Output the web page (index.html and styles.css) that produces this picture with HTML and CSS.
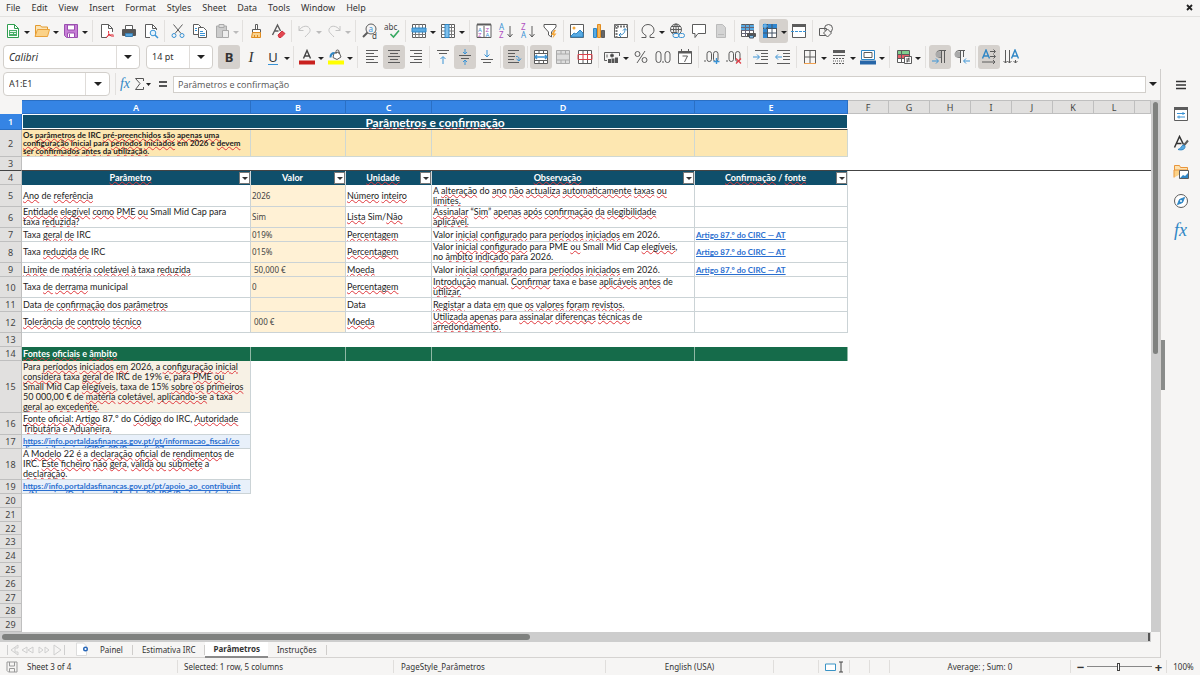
FILE: index.html
```html
<!DOCTYPE html>
<html lang="pt">
<head>
<meta charset="utf-8">
<title>Parâmetros</title>
<link rel="stylesheet" href="styles.css">
</head>
<body>
<nav class="menubar" aria-label="Menu">
<button>File</button><button>Edit</button><button>View</button><button>Insert</button><button>Format</button><button>Styles</button><button>Sheet</button><button>Data</button><button>Tools</button><button>Window</button><button>Help</button>
<button class="close" aria-label="Close"><svg width="7" height="7" viewBox="0 0 7 7"><path d="M1 1l5 5M6 1L1 6" stroke="#222" stroke-width="1.8"/></svg></button>
</nav>

<div class="toolbar" role="toolbar" aria-label="Standard">
<button class="tb dd" aria-label="New"><svg class="i" viewBox="0 0 16 16"><path d="M2.5 1.5h7l4 4v9h-11z" stroke="#2f9e4f" fill="#fff"/><path d="M9.500 1.500v4h4" stroke="#2f9e4f"/><path d="M4 7h8v6H4z" fill="#4aae68" stroke="none"/><path d="M5 8.500h6M5 10.500h3M9 10.500h2" stroke="#e8f7ec"/></svg></button>
<button class="tb dd" aria-label="Open"><svg class="i" viewBox="0 0 16 16"><path d="M1.500 13V2.500h5l1 1.500h6v2" stroke="#e39a2d" fill="#fbe3b4"/><path d="M1 13.500L3.500 6.500h12l-2 7z" fill="#fbd288" stroke="#e9a23b"/></svg></button>
<button class="tb dd" aria-label="Save"><svg class="i" viewBox="0 0 16 16"><path d="M1.500 1.500h13v13h-11l-2-2z" fill="#c77fd6" stroke="#9b4fb0"/><path d="M4.500 2h7v5h-7z" fill="#fff" stroke="#9b4fb0"/><path d="M4.500 10h7v4.500h-7z" fill="#fff" stroke="#9b4fb0"/><path d="M6.500 11v3" stroke="#9b4fb0"/></svg></button>
<span class="sep wide"></span>
<button class="tb" aria-label="Export as PDF"><svg class="i" viewBox="0 0 16 16"><path d="M8 14.500H2.500v-13h7l4 4V9" fill="#fff"/><path d="M9.500 1.500v4h4"/><path d="M9.500 8c1 4-1 6-2.500 6.500M10 11c1 2 3 2.500 5 2M8 13.500c2-1.500 4-2 6.500-1.500" stroke="#e0303c"/></svg></button>
<button class="tb" aria-label="Print"><svg class="i" viewBox="0 0 16 16"><path d="M4.500 6V2.500h7V6" fill="#fff"/><rect x="1" y="6" width="14" height="7" rx="1" fill="#555" stroke="none"/><path d="M4.500 10.500h7v3h-7z" fill="#5aa5dc" stroke="#3a7eb0"/></svg></button>
<button class="tb" aria-label="Print Preview"><svg class="i" viewBox="0 0 16 16"><path d="M7 14.500H2.500v-13h7l4 4V7" fill="#fff"/><path d="M9.500 1.500v4h4"/><circle cx="10" cy="10" r="2.800" fill="#e6f3fc" stroke="#3a93d5"/><path d="M12 12l3 3" stroke="#3a93d5" stroke-width="1.500"/></svg></button>
<span class="sep"></span>
<button class="tb" aria-label="Cut"><svg class="i" viewBox="0 0 16 16"><path d="M3.500 1.500l7.500 9M12.500 1.500L5 10.500"/><circle cx="4" cy="12.500" r="2" stroke="#3a93d5"/><circle cx="12" cy="12.500" r="2" stroke="#3a93d5"/></svg></button>
<button class="tb" aria-label="Copy"><svg class="i" viewBox="0 0 16 16"><path d="M1.500 1.500h5l3 3v7h-8z" fill="#fff"/><path d="M6.500 4.500h5l3 3v7h-8z" fill="#fff"/><path d="M8 8.500h3M8 10.500h5M8 12.500h5M3 5.500h2M3 7.500h2" stroke="#3a93d5"/></svg></button>
<button class="tb dd off" aria-label="Paste"><svg class="i" viewBox="0 0 16 16"><path d="M2.500 3h10v11.500h-10z" fill="#ccc" stroke="#aaa"/><path d="M5 1.500h5v3H5z" fill="#ddd" stroke="#aaa"/><path d="M8.500 7.500h6v7h-6z" fill="#eee" stroke="#aaa"/></svg></button>
<span class="sep"></span>
<button class="tb" aria-label="Clone Formatting"><svg class="i" viewBox="0 0 16 16"><path d="M7.500 1.500h2v5h-2zM4.500 6.500h8v3h-8z" fill="#fff"/><path d="M4.500 9.500h8v5h-9z" fill="#f9d28e" stroke="#e08c20"/><path d="M6.500 14v-2M9.500 14v-2" stroke="#e08c20"/></svg></button>
<button class="tb" aria-label="Clear Formatting"><svg class="i" viewBox="0 0 16 16"><path d="M2.500 12L7.500 2l3 6M4.500 8h4" stroke-width="1.400"/><path d="M8 12l4-4 3 2.500-4 4H9z" fill="#e34850" stroke="#d03040"/></svg></button>
<span class="sep"></span>
<button class="tb dd off" aria-label="Undo"><svg class="i" viewBox="0 0 16 16"><path d="M2 3v4.500h4.500M2 7.500C5 2 12 2 13 6.500c.5 3-2 4-5 7.500" stroke="#c4c4c4"/></svg></button>
<button class="tb dd off" aria-label="Redo"><svg class="i" viewBox="0 0 16 16"><path d="M14 3v4.500H9.500M14 7.500C11 2 4 2 3 6.500c-.5 3 2 4 5 7.500" stroke="#c4c4c4"/></svg></button>
<span class="sep wide"></span>
<button class="tb" aria-label="Find and Replace"><svg class="i" viewBox="0 0 16 16"><circle cx="9" cy="6" r="5"/><path d="M5.500 9.500L1 14" stroke-width="2"/><text x="6.500" y="8.500" class="g" fill="#3a93d5">a</text><text x="10" y="15.500" class="g" fill="#444">d</text></svg></button>
<button class="tb" aria-label="Spelling"><svg class="i" viewBox="0 0 16 16"><text x="0" y="7" class="g" fill="#444">abc</text><path d="M6.500 11l3 3 5.500-6.500" stroke="#36a860" stroke-width="1.600"/></svg></button>
<span class="sep"></span>
<button class="tb dd" aria-label="Row"><svg class="i" viewBox="0 0 16 16"><path d="M1.500 1.500h13v13h-13z" fill="#fff"/><path d="M4.500 1v14M8 1v14M11.500 1v14M1 11.500h14" stroke="#777"/><path d="M1 5h14v4H1z" fill="#59abe3" stroke="#2f86c5"/></svg></button>
<button class="tb dd" aria-label="Column"><svg class="i" viewBox="0 0 16 16"><path d="M1.500 1.500h13v13h-13z" fill="#fff"/><path d="M1 4.500h14M1 8h14M1 11.500h14M11.500 1v14" stroke="#777"/><path d="M5 1.500h4v13H5z" fill="#7fc0ec" stroke="#2f86c5"/></svg></button>
<span class="sep wide"></span>
<button class="tb" aria-label="Sort"><svg class="i" viewBox="0 0 16 16"><path d="M1 1.500h14v13H1zM8 3v12" fill="#fff"/><path d="M1 1.500h14" stroke-width="2"/><text x="2" y="8.500" class="s" fill="#3a93d5">A</text><text x="2" y="14" class="s" fill="#b04fc0">Z</text><text x="9.500" y="8.500" class="s" fill="#b04fc0">Z</text><text x="9.500" y="14" class="s" fill="#3a93d5">A</text></svg></button>
<button class="tb" aria-label="Sort Ascending"><svg class="i" viewBox="0 0 16 16"><text x="1" y="7" class="m" fill="#3a93d5">A</text><text x="1" y="15" class="m" fill="#b04fc0">Z</text><path d="M12 3v11M9.500 11l2.500 3 2.500-3"/></svg></button>
<button class="tb" aria-label="Sort Descending"><svg class="i" viewBox="0 0 16 16"><text x="1" y="7" class="m" fill="#b04fc0">Z</text><text x="1" y="15" class="m" fill="#3a93d5">A</text><path d="M12 3v11M9.500 11l2.500 3 2.500-3"/></svg></button>
<button class="tb" aria-label="AutoFilter"><svg class="i" viewBox="0 0 16 16"><path d="M2 1.500h12V4L9.500 9v5l-3-2V9L2 4z" fill="#fff"/><path d="M12 7l-3 5h2.500l-1 3.500 4-5H12l2-3.500z" fill="#f5a83c" stroke="none"/></svg></button>
<span class="sep"></span>
<button class="tb" aria-label="Insert Image"><svg class="i" viewBox="0 0 16 16"><path d="M1.500 1.500h13v13h-13z" fill="#fff"/><circle cx="5" cy="5" r="1.500" fill="#f5a83c" stroke="none"/><path d="M2 13l3-3 2 1 4-4 3 3v4H2z" fill="#59abe3" stroke="#2f86c5"/></svg></button>
<button class="tb" aria-label="Insert Chart"><svg class="i" viewBox="0 0 16 16"><path d="M2.500 5.500h3v9h-3z" fill="#59abe3" stroke="#2f86c5"/><path d="M6.500 1.500h3v13h-3z" fill="#f9b658" stroke="#e08c20"/><path d="M10.500 7.500h3v7h-3z" fill="#666"/></svg></button>
<button class="tb" aria-label="Pivot Table"><svg class="i" viewBox="0 0 16 16"><path d="M1.500 1.500h13v13h-13z" fill="#fff"/><path d="M1 3.500h14M3.500 1v14" stroke="#777" stroke-width="2" stroke-dasharray="2 1"/><path d="M6 12c4 0 6-2 6-6M10 7.500l2-2 2 2M8 10l-2 2 2 2" stroke="#2f86c5"/></svg></button>
<span class="sep"></span>
<button class="tb dd" aria-label="Special Character"><svg class="i" viewBox="0 0 16 16"><path d="M1.500 14.500h4.500v-2C3 11 2 9 2 7a6 5.500 0 0 1 12 0c0 2-1 4-4 5.500v2h4.500"/></svg></button>
<button class="tb" aria-label="Hyperlink"><svg class="i" viewBox="0 0 16 16"><circle cx="7" cy="6.500" r="5.500"/><path d="M1.500 6.500h11M7 1v11M3 3.500h8M3 9.500h5"/><ellipse cx="7" cy="6.500" rx="2.500" ry="5.500"/><rect x="4" y="10.500" width="6" height="4" rx="2" fill="#f6f5f4" stroke="#3a93d5"/><rect x="9.500" y="10.500" width="6" height="4" rx="2" stroke="#3a93d5"/></svg></button>
<button class="tb" aria-label="Comment"><svg class="i" viewBox="0 0 16 16"><path d="M1.500 1.500h13v9H7l-3 4v-4H1.500z" fill="#fff"/></svg></button>
<button class="tb off" aria-label="Headers and Footers"><svg class="i" viewBox="0 0 16 16"><path d="M3.500 1.500h6l3 3v10h-9z" fill="#d4d4d4" stroke="#bbb"/><path d="M5 11.500h6" stroke="#bbb"/></svg></button>
<span class="sep"></span>
<button class="tb" aria-label="Print Area"><svg class="i" viewBox="0 0 16 16"><path d="M1.500 1.500h12v12h-12z" fill="#fff"/><path d="M1 2h13v6H1z" fill="#59abe3" stroke="none"/><path d="M5.500 1v13M9.500 1v13M1 4.500h13M1 7.500h13M1 10.500h13" stroke="#667"/><rect x="7" y="10" width="9" height="4" rx="1" fill="#555" stroke="none"/><path d="M9.500 12.500h4v2.500h-4z" fill="#7fc0ec" stroke="#456"/></svg></button>
<button class="tb dd on" aria-label="Freeze Rows and Columns"><svg class="i" viewBox="0 0 16 16"><path d="M1.500 1.500h13v13h-13z" fill="#fff"/><path d="M1 1h14v4H5.500v10H1z" fill="#2f86d0" stroke="none"/><path d="M5.500 1v14M10 1v14M1 5.500h14M1 10h14" stroke="#456"/><path d="M3 0v6M0 3h6" stroke="#7fc0ec"/></svg></button>
<button class="tb" aria-label="Split Window"><svg class="i" viewBox="0 0 16 16"><path d="M1.500 1.500h13v13h-13z" fill="#fff"/><path d="M1 2.500h14" stroke-width="3"/><path d="M0 8.500h16" stroke="#3a93d5" stroke-dasharray="3 1"/></svg></button>
<span class="sep"></span>
<button class="tb" aria-label="Draw Functions"><svg class="i" viewBox="0 0 16 16"><path d="M1.500 5.500h7v7h-7z"/><circle cx="10.500" cy="5.500" r="4"/><path d="M9.500 6l4 4-4 4-4-4z" fill="#f6f5f4"/></svg></button>
</div>

<div class="toolbar" role="toolbar" aria-label="Formatting">
<div class="combo font"><input value="Calibri" aria-label="Font Name"><button aria-label="Font list"></button></div>
<div class="combo size"><input value="14 pt" aria-label="Font Size"><button aria-label="Size list"></button></div>
<button class="tb on" aria-label="Bold"><b class="ltr">B</b></button>
<button class="tb" aria-label="Italic"><i class="ltr serif">I</i></button>
<button class="tb dd" aria-label="Underline"><span class="ltr under">U</span></button>
<span class="sep"></span>
<button class="tb dd" aria-label="Font Color"><svg class="i" viewBox="0 0 16 16"><path d="M4.500 9.500L8 1.500l3.500 8M5.500 7h5" stroke="#444" stroke-width="1.400"/><path d="M0 11.500h16v4H0z" fill="#c9211e" stroke="none"/></svg></button>
<button class="tb dd" aria-label="Highlighting"><svg class="i" viewBox="0 0 16 16"><path d="M6 4l5-1 2 5-4 2.500-4-2z" fill="#fff"/><path d="M8 5V2.500a1.500 1.500 0 0 1 3 0V5"/><path d="M2.500 8.500c0-3 1-4.500 4-4.500" stroke="#2f86c5" stroke-width="2"/><path d="M0 11.500h16v4H0z" fill="#ff0" stroke="none"/></svg></button>
<span class="sep wide"></span>
<button class="tb" aria-label="Align Left"><svg class="i" viewBox="0 0 16 16"><path d="M2 1.500h12M2 4.500h8M2 7.500h12M2 10.500h8M2 13.500h12"/></svg></button>
<button class="tb on" aria-label="Center"><svg class="i" viewBox="0 0 16 16"><path d="M2 1.500h12M4 4.500h8M2 7.500h12M4 10.500h8M2 13.500h12"/></svg></button>
<button class="tb" aria-label="Align Right"><svg class="i" viewBox="0 0 16 16"><path d="M2 1.500h12M6 4.500h8M2 7.500h12M6 10.500h8M2 13.500h12"/></svg></button>
<span class="sep"></span>
<button class="tb" aria-label="Align Top"><svg class="i" viewBox="0 0 16 16"><path d="M2 1.500h12M4 4.500h8"/><path d="M8 15V8M5.500 10L8 7.500l2.500 2.500" stroke="#3a93d5"/></svg></button>
<button class="tb on" aria-label="Center Vertically"><svg class="i" viewBox="0 0 16 16"><path d="M2 6.500h12M4 9.500h8"/><path d="M8 0v5M6 3l2 2 2-2M8 16v-5M6 13l2-2 2 2" stroke="#3a93d5"/></svg></button>
<button class="tb" aria-label="Align Bottom"><svg class="i" viewBox="0 0 16 16"><path d="M2 10.500h12M4 13.500h8"/><path d="M8 1v7M5.500 5.500L8 8l2.500-2.500" stroke="#3a93d5"/></svg></button>
<span class="sep"></span>
<button class="tb on" aria-label="Wrap Text"><svg class="i" viewBox="0 0 16 16"><path d="M2 1.500h11M2 4.500h7M2 7.500h7M2 10.500h6M2 13.500h11"/><path d="M10 7.500c3 0 3 1 3 4M10.500 10l2.500 2 2-2.500" stroke="#3a93d5"/></svg></button>
<span class="sep"></span>
<button class="tb on" aria-label="Merge and Center"><svg class="i" viewBox="0 0 16 16"><path d="M1.500 1.500h13v13h-13z" fill="#fff"/><path d="M1 4.500h14M1 11.500h14M6 1v3.500M10.500 1v3.500M6 11.500V15M10.500 11.500V15"/><path d="M2 8h12M4 6L2 8l2 2M12 6l2 2-2 2" stroke="#3a93d5" stroke-width="1.400"/></svg></button>
<button class="tb off" aria-label="Merge Cells"><svg class="i" viewBox="0 0 16 16"><path d="M1.500 1.500h13v13h-13z" fill="#ddd" stroke="#aaa"/><path d="M1 5h14M1 11h14M6 1v4M10.500 1v4M6 11v4M10.500 11v4" stroke="#aaa"/></svg></button>
<button class="tb" aria-label="Unmerge Cells"><svg class="i" viewBox="0 0 16 16"><path d="M1.500 1.500h13v13h-13z" fill="#fff"/><path d="M6 1v4M10.500 1v4M6 11v4M10.500 11v4"/><path d="M1 5.500h14v5H1zM6 5v6M10.500 5v6" stroke="#d8434c"/></svg></button>
<span class="sep"></span>
<button class="tb dd" aria-label="Currency"><svg class="i" viewBox="0 0 16 16"><path d="M3 11.500H.5v-8h15V7M3 5.500v3"/><circle cx="8" cy="6.500" r="1.500" fill="#444"/><path d="M5.500 10v4M9 9.500v4.500M12.500 8.500V14" stroke-width="3" stroke="#555"/></svg></button>
<button class="tb" aria-label="Percent"><svg class="i" viewBox="0 0 16 16"><circle cx="4.500" cy="5" r="2.500"/><circle cx="11.500" cy="11" r="2.500"/><path d="M12 2L4 14"/></svg></button>
<button class="tb" aria-label="Number"><svg class="i" viewBox="0 0 16 16"><rect x="1" y="2.500" width="5" height="11" rx="2.500"/><rect x="10" y="2.500" width="5" height="11" rx="2.500"/><path d="M8 12v2"/></svg></button>
<button class="tb" aria-label="Date"><svg class="i" viewBox="0 0 16 16"><path d="M1.500 2.500h13v12h-13z" fill="#fff"/><path d="M1 3.500h14" stroke-width="2"/><path d="M4.500 0v3M11.500 0v3M5.500 7h5l-3 6"/></svg></button>
<span class="sep"></span>
<button class="tb" aria-label="Add Decimal Place"><svg class="i" viewBox="0 0 16 16"><path d="M1 11v2"/><rect x="3" y="2.500" width="4.500" height="10" rx="2.250"/><rect x="9.500" y="2.500" width="4.500" height="10" rx="2.250"/><path d="M12.500 9v6M9.500 12.500h6" stroke="#3a93d5" stroke-width="1.400"/></svg></button>
<button class="tb" aria-label="Delete Decimal Place"><svg class="i" viewBox="0 0 16 16"><path d="M1 11v2"/><rect x="3" y="2.500" width="4.500" height="10" rx="2.250"/><rect x="9.500" y="2.500" width="4.500" height="10" rx="2.250"/><path d="M10 9.500l5 5M15 9.500l-5 5" stroke="#e0404a" stroke-width="1.300"/></svg></button>
<span class="sep"></span>
<button class="tb" aria-label="Increase Indent"><svg class="i" viewBox="0 0 16 16"><path d="M2 1.500h13M8 4.500h7M8 7.500h7M8 10.500h7M2 14.500h13"/><path d="M0 8h6M4 5.500L6.500 8 4 10.500" stroke="#3a93d5"/></svg></button>
<button class="tb" aria-label="Decrease Indent"><svg class="i" viewBox="0 0 16 16"><path d="M2 1.500h13M8 4.500h7M8 7.500h7M8 10.500h7M2 14.500h13"/><path d="M1 8h6M3 5.500L.5 8 3 10.500" stroke="#3a93d5"/></svg></button>
<span class="sep"></span>
<button class="tb dd" aria-label="Borders"><svg class="i" viewBox="0 0 16 16"><path d="M2 1.500h12M2.500 1v13M13.500 1v13M8 1v13M2 8h12"/><path d="M2 14.500h12" stroke="#f0a050"/></svg></button>
<button class="tb dd" aria-label="Border Style"><svg class="i" viewBox="0 0 16 16"><path d="M2 2.500h12" stroke-width="3"/><path d="M2 6.500h12"/><path d="M2 9.500h12M2 14.500h12" stroke-dasharray="2 1"/><path d="M2 12h12" stroke-dasharray="1 1"/></svg></button>
<button class="tb dd" aria-label="Border Color"><svg class="i" viewBox="0 0 16 16"><path d="M1.500 1.500h13v9h-13z" fill="#fff" stroke="#2f86c5"/><path d="M4 3.500h8v5H4z"/><path d="M0 11.500h16v4H0z" fill="#2766a8" stroke="none"/></svg></button>
<span class="sep wide"></span>
<button class="tb dd" aria-label="Conditional"><svg class="i" viewBox="0 0 16 16"><path d="M1.500 1.500h12v12h-12z" fill="#fff"/><path d="M2 2h11v3H2z" fill="#7fd08f" stroke="none"/><path d="M2 5h11v4H2z" fill="#e8606a" stroke="none"/><path d="M5.500 1v13M1 5.500h13M1 9.500h13"/><path d="M8.500 7.500h7v7h-7z" fill="#fff"/><path d="M10 10h4M10 12h4M13 8.500l-2 5"/></svg></button>
<span class="sep wide"></span>
<button class="tb on" aria-label="Left-To-Right"><svg class="i" viewBox="0 0 16 16"><path d="M14 1.500H8a3.500 3.500 0 0 0 0 7h1.500M9.500 1.500V14M12.500 1.500V14"/><path d="M6 2.500h3v6H7a3 3 0 0 1-1-6z" fill="#aaa" stroke="none"/><path d="M0 12h6M4 9.500L6.500 12 4 14.500" stroke="#3a93d5"/></svg></button>
<button class="tb" aria-label="Right-To-Left"><svg class="i" viewBox="0 0 16 16"><path d="M11 1.500H5a3.500 3.500 0 0 0 0 7h1.500M6.500 1.500V14M9.500 1.500V8"/><path d="M3 2.500h3v6H4a3 3 0 0 1-1-6z" fill="#aaa" stroke="none"/><path d="M10 12h6M12 9.500L9.500 12l2.500 2.500" stroke="#3a93d5"/></svg></button>
<span class="sep"></span>
<button class="tb on" aria-label="Text direction left to right"><svg class="i" viewBox="0 0 16 16"><path d="M1.500 9.500L5 1l3.500 8.500M2.500 7h5" stroke="#2f86c5" stroke-width="1.400"/><path d="M9 2.500h5M12.500.5l2 2-2 2M9 7.500h5M12.500 5.500l2 2-2 2M1 13h13M12 11l2 2-2 2"/></svg></button>
<button class="tb" aria-label="Text direction top to bottom"><svg class="i" viewBox="0 0 16 16"><path d="M8.500 9.500L12 1l3.500 8.500M9.500 7h5" stroke="#2f86c5" stroke-width="1.400"/><path d="M2.500 1v13M.5 12l2 2 2-2M6.500 1v13M4.500 12l2 2 2-2M12.500 11v3M10.500 12l2 2 2-2"/></svg></button>
</div>

<div class="main">
<div class="work">
<div class="formulabar">
<div class="combo name"><input value="A1:E1" aria-label="Name Box"><button aria-label="Names"></button></div>
<span class="sep"></span>
<button class="fx" aria-label="Function Wizard">fx</button>
<button class="sum" aria-label="Select Function"><svg width="18" height="14" viewBox="0 0 18 14" fill="none" stroke="#555"><path d="M9.500 4V1.500h-8l4.500 5-4.500 6h8V10"/><path d="M12 6h5l-2.500 3z" fill="#222" stroke="none"/></svg></button>
<button class="eq" aria-label="Formula"><svg width="10" height="8" viewBox="0 0 10 8"><path d="M1 2h8M1 6h8" stroke="#555" stroke-width="1.800"/></svg></button>
<input class="formula" value="Parâmetros e confirmação" aria-label="Input line">
<button class="expand" aria-label="Expand Formula Bar"></button>
</div>

<div class="gridwrap">
<table class="sheet">
<colgroup><col class="ch"><col class="ca"><col class="cb"><col class="cc"><col class="cd"><col class="ce"><col class="cf"><col class="cf"><col class="cf"><col class="cf"><col class="cf"><col class="cf"><col class="cf"><col></colgroup>
<thead><tr><th class="corner"></th><th class="sel">A</th><th class="sel">B</th><th class="sel">C</th><th class="sel">D</th><th class="sel">E</th><th>F</th><th>G</th><th>H</th><th>I</th><th>J</th><th>K</th><th>L</th><th></th></tr></thead>
<tbody>
<tr class="h16"><th class="sel">1</th><td colspan="5" class="title"><u>Parâmetros</u> e <u>confirmação</u></td><td colspan="8"></td></tr>
<tr class="h27 note"><th>2</th><td>Os <u>parâmetros</u> de IRC <u>pré-preenchidos</u> <u>são</u> <u>apenas</u> <u>uma</u> <br><u>configuração</u> <u>inicial</u> para <u>períodos</u> <u>iniciados</u> em 2026 e <u>devem</u> <br><u>ser</u> <u>confirmados</u> <u>antes</u> <u>da</u> <u>utilização.</u></td><td></td><td></td><td></td><td></td><td colspan="8"></td></tr>
<tr class="h14 frozen"><th>3</th><td colspan="13"></td></tr>
<tr class="h14 head"><th>4</th><td><div class="hc"><span><u>Parâmetro</u></span><button aria-label="Filter"></button></div></td><td><div class="hc"><span>Valor</span><button aria-label="Filter"></button></div></td><td><div class="hc"><span><u>Unidade</u></span><button aria-label="Filter"></button></div></td><td><div class="hc"><span><u>Observação</u></span><button aria-label="Filter"></button></div></td><td><div class="hc"><span><u>Confirmação</u> / <u>fonte</u></span><button aria-label="Filter"></button></div></td><td colspan="8"></td></tr>
<tr class="h22 data"><th>5</th><td><u>Ano</u> de <u>referência</u></td><td class="v">2026</td><td><u>Número</u> <u>inteiro</u></td><td>A <u>alteração</u> do <u>ano</u> <u>não</u> <u>actualiza</u> <u>automaticamente</u> <u>taxas</u> <u>ou</u> <br><u>limites.</u></td><td></td><td colspan="8"></td></tr>
<tr class="h21 data"><th>6</th><td><u>Entidade</u> <u>elegível</u> <u>como</u> <u>PME</u> <u>ou</u> Small Mid Cap para <br>taxa <u>reduzida</u>?</td><td class="v">Sim</td><td><u>Lista</u> Sim/<u>Não</u></td><td><u>Assinalar</u> “<u>Sim</u>” <u>apenas</u> <u>após</u> <u>confirmação</u> <u>da</u> <u>elegibilidade</u> <br><u>aplicável.</u></td><td></td><td colspan="8"></td></tr>
<tr class="h14 data"><th>7</th><td>Taxa <u>geral</u> <u>de</u> IRC</td><td class="v">019%</td><td><u>Percentagem</u></td><td>Valor <u>inicial</u> <u>configurado</u> para <u>períodos</u> <u>iniciados</u> em 2026.</td><td><a href="#circ">Artigo 87.º do CIRC — AT</a></td><td colspan="8"></td></tr>
<tr class="h21 data"><th>8</th><td>Taxa <u>reduzida</u> <u>de</u> IRC</td><td class="v">015%</td><td><u>Percentagem</u></td><td>Valor <u>inicial</u> <u>configurado</u> para PME <u>ou</u> Small Mid Cap <u>elegíveis</u>, <br>no <u>âmbito</u> <u>indicado</u> para 2026.</td><td><a href="#circ">Artigo 87.º do CIRC — AT</a></td><td colspan="8"></td></tr>
<tr class="h14 data"><th>9</th><td><u>Limite</u> de <u>matéria</u> <u>coletável</u> <u>à</u> taxa <u>reduzida</u></td><td class="v m1">50,000 €</td><td><u>Moeda</u></td><td>Valor <u>inicial</u> <u>configurado</u> para <u>períodos</u> <u>iniciados</u> em 2026.</td><td><a href="#circ">Artigo 87.º do CIRC — AT</a></td><td colspan="8"></td></tr>
<tr class="h21 data"><th>10</th><td>Taxa <u>de</u> <u>derrama</u> municipal</td><td class="v">0</td><td><u>Percentagem</u></td><td><u>Introdução</u> manual. <u>Confirmar</u> taxa e base <u>aplicáveis</u> <u>antes</u> de <br><u>utilizar.</u></td><td></td><td colspan="8"></td></tr>
<tr class="h14 data"><th>11</th><td>Data <u>de</u> <u>confirmação</u> dos <u>parâmetros</u></td><td class="v"></td><td>Data</td><td><u>Registar</u> a data <u>em</u> que <u>os</u> <u>valores</u> <u>foram</u> <u>revistos.</u></td><td></td><td colspan="8"></td></tr>
<tr class="h21 data"><th>12</th><td><u>Tolerância</u> <u>de</u> <u>controlo</u> <u>técnico</u></td><td class="v m1">000 €</td><td><u>Moeda</u></td><td><u>Utilizada</u> <u>apenas</u> para <u>assinalar</u> <u>diferenças</u> <u>técnicas</u> de <br><u>arredondamento.</u></td><td></td><td colspan="8"></td></tr>
<tr class="h14"><th>13</th><td colspan="13"></td></tr>
<tr class="h14 section"><th>14</th><td><u>Fontes</u> <u>oficiais</u> e <u>âmbito</u></td><td></td><td></td><td></td><td></td><td colspan="8"></td></tr>
<tr class="h52 src cream"><th>15</th><td>Para <u>períodos</u> <u>iniciados</u> <u>em</u> 2026, a <u>configuração</u> <u>inicial</u> <br><u>considera</u> taxa <u>geral</u> de IRC de 19% e, para <u>PME</u> <u>ou</u> <br>Small Mid Cap <u>elegíveis</u>, taxa de 15% <u>sobre</u> <u>os</u> <u>primeiros</u> <br>50 000,00 € de <u>matéria</u> <u>coletável</u>, <u>aplicando-se</u> a taxa <br><u>geral</u> <u>ao</u> <u>excedente.</u></td><td colspan="12"></td></tr>
<tr class="h22 src"><th>16</th><td><u>Fonte</u> <u>oficial</u>: <u>Artigo</u> 87.º do <u>Código</u> do IRC, <u>Autoridade</u> <br><u>Tributária</u> e <u>Aduaneira.</u></td><td colspan="12"></td></tr>
<tr class="h14 src url"><th>17</th><td><div class="clip"><a href="#f1">https://info.portaldasfinancas.gov.pt/pt/informacao_fiscal/co<br>digos_tributarios/CIRC_2R/Pages/irc87.aspx</a></div></td><td colspan="12"></td></tr>
<tr class="h31 src"><th>18</th><td>A <u>Modelo</u> 22 <u>é</u> a <u>declaração</u> <u>oficial</u> de <u>rendimentos</u> de <br>IRC. <u>Este</u> <u>ficheiro</u> <u>não</u> <u>gera</u>, <u>valida</u> <u>ou</u> <u>submete</u> a <br><u>declaração.</u></td><td colspan="12"></td></tr>
<tr class="h14 src url"><th>19</th><td><div class="clip"><a href="#f2">https://info.portaldasfinancas.gov.pt/pt/apoio_ao_contribuint<br>e/Negocios/Declaracoes/Modelo_22_IRC/Paginas/default.asp</a></div></td><td colspan="12"></td></tr>
<tr class="h14"><th>20</th><td colspan="13"></td></tr>
<tr class="h14"><th>21</th><td colspan="13"></td></tr>
<tr class="h13"><th>22</th><td colspan="13"></td></tr>
<tr class="h14"><th>23</th><td colspan="13"></td></tr>
<tr class="h14"><th>24</th><td colspan="13"></td></tr>
<tr class="h14"><th>25</th><td colspan="13"></td></tr>
<tr class="h14"><th>26</th><td colspan="13"></td></tr>
<tr class="h13"><th>27</th><td colspan="13"></td></tr>
<tr class="h14"><th>28</th><td colspan="13"></td></tr>
<tr class="h14"><th>29</th><td colspan="13"></td></tr>
</tbody>
</table>
<div class="vscroll"><div class="vthumb"></div><div class="vrest"></div></div>
</div>
<div class="hscroll"><div class="hthumb"></div><div class="hsplit"></div></div>
<div class="tabs">
<svg class="nav" width="60" height="12" viewBox="0 0 60 12" fill="none" stroke="#cfcfcf"><path d="M1.500 1v10M12 1L5 6l7 5V8H9V4h3zM21 3l-5 3 5 3zM27 3l-5 3 5 3zM33 3v6l4-3zM39 3v6l4-3zM48 1v10l7-5zM58.500 1v10"/></svg>
<button class="add" aria-label="Add Sheet"><svg width="14" height="14" viewBox="0 0 14 14"><path d="M1.500 1h7l3 3v9.500h-10z" fill="#fff" stroke="#ddd"/><circle cx="10.500" cy="7" r="1.800" fill="#fff" stroke="#2766b8" stroke-width="1.400"/></svg></button>
<button class="tab t1">Painel</button><button class="tab t2">Estimativa IRC</button><button class="tab active">Parâmetros</button><button class="tab t4">Instruções</button>
</div>
</div>
<aside class="sidebar">
<button aria-label="Sidebar Settings"><svg class="i" viewBox="0 0 16 16"><path d="M3 4.500h10M3 8h10M3 11.500h10" stroke="#333" stroke-width="1.400"/></svg></button>
<button aria-label="Properties"><svg class="i" viewBox="0 0 16 16"><path d="M1.500 1.500h13v13h-13z" fill="#fff"/><path d="M1 2.500h14" stroke-width="3"/><path d="M4 7.500h8M4 11h8M10 6v3M6 9.500v3" stroke="#3a93d5"/></svg></button>
<button aria-label="Styles"><svg class="i" viewBox="0 0 16 16"><path d="M1.500 12.500L6.500 1.500l4 8M3.500 8.500h5" stroke="#333" stroke-width="1.500"/><path d="M15 5.500l-5 6" stroke-width="2"/><path d="M11 10c-3 0-2 3-6 4.500 4 1 7 0 7-3z" fill="#59abe3" stroke="#2f86c5"/></svg></button>
<button aria-label="Gallery"><svg class="i" viewBox="0 0 16 16"><path d="M1.500 13V1.500h5l1 2h7V6" fill="#fde2b0" stroke="#e9953b"/><path d="M1 13.500V6h14" stroke="#e9953b" fill="#fbd288"/><path d="M6.500 6.500h9v8h-9z" fill="#fff"/><path d="M7 14l3-3 2 1 3-3v5z" fill="#2f86c5" stroke="none"/></svg></button>
<button aria-label="Navigator"><svg class="i" viewBox="0 0 16 16"><circle cx="8" cy="8" r="6.500" fill="#fff"/><path d="M11.500 4.500L9.500 9.500l-5 2 2-5z" fill="#2f86c5" stroke="#2f86c5"/><circle cx="8" cy="8" r="1" fill="#fff" stroke="none"/></svg></button>
<button class="fx big" aria-label="Functions">fx</button>
<div class="grip"></div>
</aside>
</div>

<footer class="status">
<span class="s1"><svg width="12" height="12" viewBox="0 0 12 12" fill="none" stroke="#999"><path d="M1 1h10v10H2.500L1 9.500zM3.500 1v4h5V1M3.500 11V7.500h5V11"/></svg>Sheet 3 of 4</span>
<span class="s2">Selected: 1 row, 5 columns</span>
<span class="s3">PageStyle_Parâmetros</span>
<span class="s4">English (USA)</span>
<span class="s5"></span>
<span class="s6"><svg width="20" height="12" viewBox="0 0 20 12" fill="none"><path d="M1.500 3h10v6.500h-10z" stroke="#3a93c5" fill="#fff"/><path d="M15 1h4M15 11h4M17 1v10" stroke="#444"/></svg></span>
<span class="s7"></span><span class="s8"></span>
<span class="s9">Average: ; Sum: 0</span>
<span class="s10"><button aria-label="Zoom out">−</button><input type="range" min="0" max="100" value="49" aria-label="Zoom"><button aria-label="Zoom in">+</button></span>
<span class="s11">100%</span>
</footer>
</body>
</html>
```
FILE: styles.css
```css
* { box-sizing: border-box; }
body {
  margin: 0; height: 100vh; display: flex; flex-direction: column;
  background: #f6f5f4; color: #333; font: 9px/12px "Noto Sans", sans-serif; overflow: hidden;
}
button, input { font: inherit; color: inherit; border: 0; padding: 0; margin: 0; background: none; }

.menubar { flex: none; display: flex; gap: 11px; height: 17px; padding: 0 7px 0 6px; border-bottom: 1px solid #e3e2e0; }
.menubar .close { margin-left: auto; }

.toolbar { flex: none; display: flex; align-items: center; height: 26px; padding: 2px 1px 0 2px; }
.tb { flex: none; width: 22px; height: 24px; border-radius: 3px; display: flex; align-items: center; justify-content: center; }
.tb.dd { width: 29px; justify-content: flex-start; padding-left: 3px; }
.tb.dd::after, .combo button::after, .expand::after {
  content: ""; border: 3px solid transparent; border-top: 3px solid #222; border-bottom: 0; margin-top: 2px;
}
.tb.dd::after { margin-left: 3px; flex: none; }
.tb.dd.off::after { border-top-color: #bbb; }
.tb.on { background: #d5d1cd; }
.i { width: 16px; height: 16px; flex: none; fill: none; stroke: #5c5c5c; }
.i text { stroke: none; font-family: "Noto Sans", sans-serif; }
.i .g { font-size: 8px; }
.i .m { font-size: 8px; }
.i .s { font-size: 6px; }
.sep { flex: none; width: 1px; height: 22px; margin: 0 2px; background: #e2e0de; }
.sep.wide { margin: 0 3px; }
.ltr { font-size: 13px; line-height: 16px; width: 16px; text-align: center; }
.serif { font-family: "Liberation Serif", serif; font-size: 15px; }
.under { border-bottom: 1px solid #3a93d5; width: 10px; margin: 0 3px; line-height: 14px; }

.combo { display: flex; flex: none; height: 24px; background: #fff; border: 1px solid #d2cfcb; border-radius: 4px; }
.combo input { flex: 1; min-width: 0; padding-left: 5px; }
.combo button { width: 23px; border-left: 1px solid #dfdcd9; display: flex; align-items: center; justify-content: center; }
.combo button::after, .expand::after { border-width: 4px 4px 0; margin: 0; }
.font { width: 137px; margin: 0 6px 0 1px; }
.font input { font-style: italic; font-size: 10px; }
.size { width: 67px; margin-right: 5px; }

.main { flex: 1; display: flex; min-height: 0; }
.work { flex: 1; min-width: 0; display: flex; flex-direction: column; }
.formulabar { flex: none; display: flex; align-items: center; height: 31px; padding: 3px 3px 4px 3px; }
.name { width: 107px; margin-right: 3px; }
.name button { width: 24px; }
.fx { font: italic 14px/16px "Liberation Serif", serif; color: #2f86c5; width: 16px; }
.formulabar .sep { margin-right: 1px; }
.sum { width: 20px; height: 14px; }
.eq { width: 14px; margin: 0 3px; height: 12px; display: flex; align-items: center; justify-content: center; }
.formula { flex: 1; min-width: 0; height: 17px; background: #fff; border: 1px solid #d2cfcb; padding-left: 4px; color: #555; font-family: "Open Sans", sans-serif; }
.expand { width: 11px; display: flex; justify-content: flex-end; }

.gridwrap { flex: 1; display: flex; min-height: 0; overflow: hidden; background: #fff; }
.sheet { flex: 1; width: 0; table-layout: fixed; border-collapse: separate; border-spacing: 0; align-self: flex-start; background: #fff; color: #1c1c1c; font: 9px/10px Lato, sans-serif; }
.ch { width: 22px; } .ca { width: 229px; } .cb { width: 95px; } .cc { width: 86px; } .cd { width: 263px; } .ce { width: 153px; } .cf { width: 41px; }
.sheet th { background: #e1e0df; color: #444; font: 9px/11px "Noto Sans", sans-serif; border-right: 1px solid #bfbfbf; border-bottom: 1px solid #bfbfbf; padding: 0; text-align: center; }
.sheet thead th { height: 14px; border-top: 1px solid #bfbfbf; }
.sheet th.corner { background: #f6f5f4; border-color: #f6f5f4; }
.sheet th.sel { background: #3584e4; border-color: #2a6fc4; color: #fff; font-weight: 600; }
.sheet td { padding: 0; overflow: hidden; white-space: nowrap; }
.h13 { height: 13px; } .h14 { height: 14px; } .h16 { height: 16px; } .h21 { height: 21px; } .h22 { height: 22px; } .h27 { height: 27px; } .h31 { height: 31px; } .h52 { height: 52px; }
.sheet u { text-decoration: underline wavy #e0393e 1px; text-underline-offset: 0; text-decoration-skip-ink: none; }
.sheet .title { background: #0f4f6b; color: #fff; text-align: center; font: bold 12px/13px Lato, sans-serif; border: 1px solid #fff; border-bottom: 1px solid #444; box-shadow: inset 0 -1px #fff; }
.note td { background: #fde7b1; border-right: 1px solid #cfd8d3; border-bottom: 1px solid #cfd8d3; font-weight: bold; font-size: 8px; line-height: 8px; }
.frozen th, .frozen td { border-bottom: 1px solid #444 !important; }
.head td { background: #0f4f6b; color: #fff; font-weight: bold; font-size: 9px; border-right: 1px solid #cfd8dc; }
.note td:last-child, .head td:last-child, .data td:last-child, .section td:last-child { background: none; border: 0; }
.hc { display: flex; align-items: center; }
.hc span { flex: 1; text-align: center; }
.hc button { width: 11px; height: 12px; background: #fff; border: 1px solid #777; display: flex; align-items: center; justify-content: center; }
.hc button::after { content: ""; border: 3px solid transparent; border-top: 3px solid #333; border-bottom: 0; }
.data td { border-right: 1px solid #cbd3d6; border-bottom: 1px solid #cbd3d6; padding-left: 1px; }
.data .v { background: #fff1d5; color: #444; font: 8px/10px "Noto Sans", sans-serif; padding-left: 1px; }
.data .m1 { padding-left: 3px; }
.sheet a { color: #2a6fd0; font-weight: bold; font-size: 8px; text-decoration: underline; }
.section td { background: #156b4a; color: #fff; font-weight: bold; font-size: 9px; border-right: 1px solid #8fb8a5; }
.section td:nth-child(2), .note td:nth-child(2) { padding-left: 1px; }
.src td:nth-child(2) { border-right: 1px solid #cbd3d6; border-bottom: 1px solid #cbd3d6; padding-left: 1px; }
.cream td:nth-child(2) { background: #f7f1e5; }
.url td:nth-child(2) { background: #e8f0fa; }
.clip { height: 13px; overflow: hidden; line-height: 8px; padding-top: 2px; }

.vscroll { flex: none; width: 9px; background: #cdcdcd; padding: 2px; display: flex; flex-direction: column; }
.vthumb { flex: 252; background: #7f817f; border-radius: 3px; }
.vrest { flex: 277; }
.hscroll { flex: none; height: 10px; margin-right: 9px; background: #cdcdcd; display: flex; align-items: center; justify-content: space-between; padding: 0 1px 0 2px; }
.hthumb { width: 46%; height: 6px; border-radius: 3px; background: #7f817f; }
.hsplit { width: 2px; height: 8px; background: #555; }
.tabs { flex: none; display: flex; height: 16px; padding-left: 6px; border-bottom: 1px solid #d5d3d1; font-size: 8px; }
.nav { align-self: center; }
.add { width: 14px; margin: 0 11px 0 9px; }
.tab { border-right: 1px solid #cfcdcb; height: 10px; line-height: 10px; margin-top: 3px; padding: 0 9px; }
.tab.active { height: 16px; margin: 0; background: #fff; font-weight: bold; border: 0; border-bottom: 2px solid #8a8a8a; padding: 0 8px; }
.tab.t1 { padding-left: 0; }

.sidebar { flex: none; width: 40px; border-left: 1px solid #d0cecc; display: flex; flex-direction: column; align-items: center; padding-top: 8px; gap: 13px; position: relative; }
.sidebar button { width: 16px; height: 16px; }
.sidebar .big { font-size: 18px; }
.grip { position: absolute; left: 0; top: 46%; width: 4px; height: 50px; background: #8a8c8a; }

.status { flex: none; height: 17px; display: flex; align-items: center; font-size: 8px; }
.status span { height: 13px; display: flex; align-items: center; border-right: 1px solid #e0dedc; }
.s1 { width: 178px; padding-left: 6px; gap: 9px; }
.s2 { width: 216px; padding-left: 6px; }
.s3 { width: 212px; padding-left: 7px; }
.s4 { width: 168px; justify-content: center; }
.s5 { width: 45px; }
.s6 { width: 31px; justify-content: center; }
.s7, .s8 { width: 20px; }
.s9 { flex: 1; justify-content: center; }
.s10 { width: 96px; padding: 0 3px 0 5px; gap: 2px; }
.s10 button { width: 9px; font: bold 13px/12px "Noto Sans", sans-serif; }
.s10 input { flex: 1; min-width: 0; height: 9px; appearance: none; background: linear-gradient(#888, #888) center / 100% 1px no-repeat; }
.s10 input::-webkit-slider-thumb { appearance: none; width: 3px; height: 8px; border: 1px solid #444; background: #fff; }
.status .s11 { width: 33px; justify-content: center; border: 0; }
```
